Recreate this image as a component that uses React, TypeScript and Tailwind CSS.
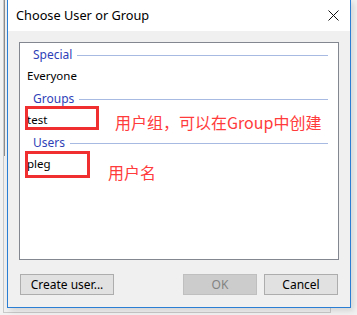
import React from 'react';

const font = { fontFamily: '"Noto Sans", "Open Sans", sans-serif' };
const cjk = { fontFamily: '"Noto Sans CJK SC", "Noto Sans", sans-serif' };

function GroupHeader({ label }: { label: string }) {
  return (
    <div className="mt-[2px] flex h-[20px] items-center pl-[13px] pr-[10px]">
      <span className="text-[12px] leading-none text-[#2f3fb8]">{label}</span>
      <div className="ml-[5px] h-px flex-1 bg-[#a7bbe2]" />
    </div>
  );
}

function Item({ label }: { label: string }) {
  return (
    <div className="flex h-[22px] items-center pl-[7px] text-[11.5px] leading-none text-black">{label}</div>
  );
}

function Button({ label, disabled, wide }: { label: string; disabled?: boolean; wide?: boolean }) {
  return (
    <button
      className={
        disabled
          ? 'h-[21px] w-[74px] border border-[#bfbfbf] bg-[#cccccc] text-[12px] leading-none text-[#838383]'
          : wide
            ? 'h-[21px] w-[94px] border border-[#adadad] bg-[#e1e1e1] text-[12px] leading-none text-black'
            : 'h-[21px] w-[74px] border border-[#adadad] bg-[#e1e1e1] text-[12px] leading-none text-black'
      }
    >
      {label}
    </button>
  );
}

export default function App() {
  return (
    <div className="relative h-[315px] w-[357px] overflow-hidden bg-[#f2f2f2]" style={font}>
      {/* window behind the dialog */}
      <div className="absolute left-[3px] top-[-10px] h-[323px] w-[328px] border border-[#c9c9c9] bg-[#f0f0f0]" />
      <div className="absolute left-[4px] top-0 h-[156px] w-px bg-[#8c8c8c]" />

      {/* dialog */}
      <div className="absolute left-[7px] top-[-1px] flex h-[309px] w-[344px] flex-col border border-[#2a7fd4] bg-[#f0f0f0] shadow-[3px_3px_6px_rgba(0,0,0,0.12)]">
        <div className="flex h-[31px] items-center justify-between bg-white pl-[8px] pr-[10px]">
          <span className="text-[12.75px] text-black">Choose User or Group</span>
          <svg width="11" height="11" viewBox="0 0 11 11" className="mr-[1px]">
            <path d="M0.5 0.5 L10.5 10.5 M10.5 0.5 L0.5 10.5" stroke="#111" strokeWidth="1" />
          </svg>
        </div>

        <div className="flex flex-1 flex-col px-[11px] pt-[11px]">
          <div className="h-[218px] border border-[#828790] bg-white">
            <GroupHeader label="Special" />
            <Item label="Everyone" />
            <GroupHeader label="Groups" />
            <Item label="test" />
            <GroupHeader label="Users" />
            <Item label="pleg" />
          </div>

          <div className="mt-[14px] flex items-center px-[1px]">
            <Button label="Create user..." wide />
            <div className="flex-1" />
            <Button label="OK" disabled />
            <div className="w-[7px]" />
            <Button label="Cancel" />
          </div>
        </div>
      </div>

      {/* red annotations */}
      <div className="absolute left-[25px] top-[106px] h-[24px] w-[74px] border-[3px] border-[#f03030]" />
      <div className="absolute left-[25px] top-[151px] h-[27px] w-[65px] border-[3px] border-[#f03030]" />
      <div className="absolute left-[115px] top-[112px] text-[16px] leading-[20px] text-[#ff3b3b]" style={cjk}>
        用户组，可以在Group中创建
      </div>
      <div className="absolute left-[108px] top-[162px] text-[16px] leading-[20px] text-[#ff3b3b]" style={cjk}>
        用户名
      </div>
    </div>
  );
}
